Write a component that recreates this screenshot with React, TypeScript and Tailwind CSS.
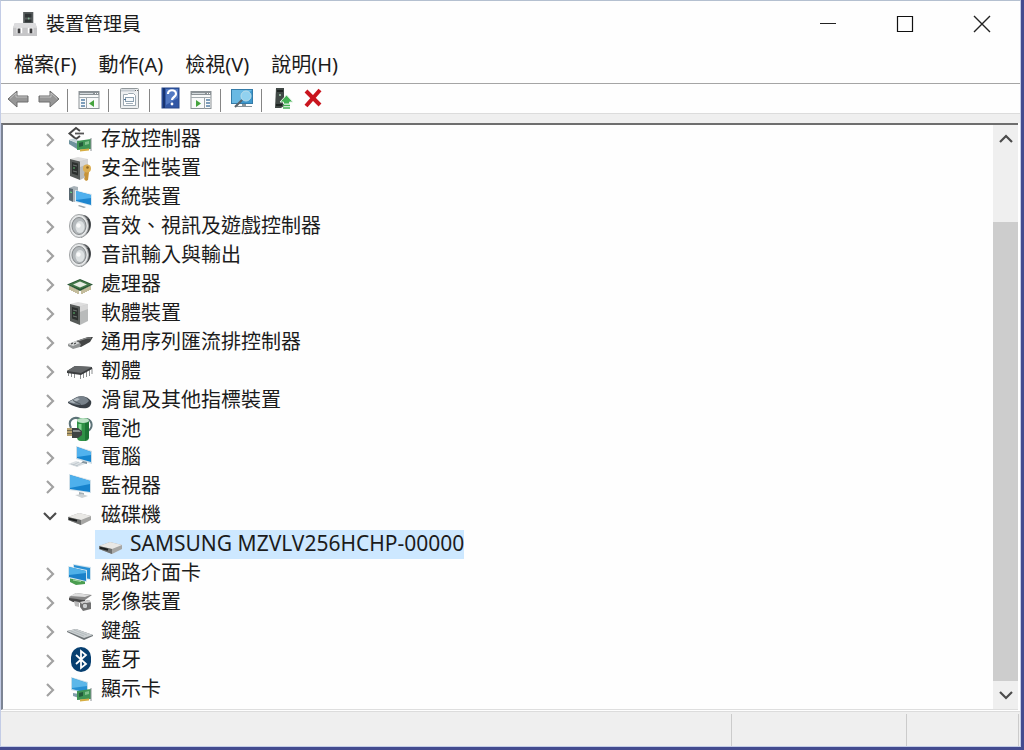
import type { ReactNode } from "react";

function Icon({ children, className = "h-[26px] w-[26px]" }: { children: ReactNode; className?: string }) {
    return (
        <svg viewBox="0 0 26 26" className={`shrink-0 ${className}`} aria-hidden="true">
            {children}
        </svg>
    );
}

const CardShape = () => (
    <>
        <path d="M10 15l14-2v10l-14 1z" fill="#3f9455" />
        <path d="M12 17l4-1v4l-4 1z" fill="#245a3b" />
        <path d="M18 16l4-1v3l-4 1z" fill="#7fc08c" />
        <path d="M13 23.500l9-1v2l-9 1z" fill="#d6ae43" />
        <path d="M24 12v13" stroke="#8a9094" />
    </>
);

const Storage = () => (
    <Icon>
        <path d="M13 5L9 2 2.500 7.500 9 13l4-3" fill="none" stroke="#454545" strokeWidth="2" />
        <path d="M8 7.500h9" fill="none" stroke="#555" strokeWidth="1.800" />
        <path d="M2 14l8 3v6l-8-5z" fill="#6f939e" />
        <path d="M2 13.500l5-1 7 3-4 2z" fill="#c6d5da" />
        <CardShape />
    </Icon>
);

const TowerShape = () => (
    <>
        <path d="M3 4l8-2 10 2-8 2.500z" fill="#dedede" />
        <path d="M3 4l10 2.500V25l-10-4z" fill="#565a58" />
        <path d="M13 6.500L21 4v17l-8 4z" fill="#b9bbbb" />
        <path d="M13 6.500L21 4v5l-8 3z" fill="#d6d6d6" />
        <path d="M5 7l6 1.500v12L5 18.500z" fill="#2c302e" />
        <path d="M6 10l4 1M6 16l4 1" stroke="#6f7572" />
        <circle cx="7" cy="13" r="0.800" fill="#63c977" />
    </>
);

const Software = () => (
    <Icon>
        <TowerShape />
    </Icon>
);

const Security = () => (
    <Icon>
        <TowerShape />
        <path d="M18 16l4 1-1 8-2 1-2-2 1-2-1-2z" fill="#c79338" />
        <circle cx="20" cy="13.500" r="4" fill="#dcae52" />
        <circle cx="20.500" cy="12.500" r="1.300" fill="#8e6824" />
    </Icon>
);

const SystemDevice = () => (
    <Icon>
        <path d="M2 4l5-2 4 1v14l-4 1-5-2z" fill="#a8b2b8" />
        <path d="M2 4l4 1v13l-4-2z" fill="#596770" />
        <path d="M3 8l2 .5" stroke="#6be28a" />
        <path d="M8 6l17 4v12L8 18z" fill="#dceaf2" />
        <path d="M9 7l15 4v10L9 17z" fill="#1e86cf" />
        <path d="M9 7l15 4v3L9 16z" fill="#4fb0ee" />
        <path d="M12 21l7 2-2 1-6-2z" fill="#9aa4aa" />
    </Icon>
);

const Speaker = () => (
    <Icon>
        <path d="M13 2c7-1 11 4 11 10s-5 11-10 13z" fill="#5d6063" />
        <path d="M21 6c3 5 1 11-3 15" stroke="#36393b" strokeWidth="2" fill="none" />
        <ellipse cx="12" cy="13" rx="9.500" ry="11.500" fill="#e4e6e7" stroke="#a0a3a5" />
        <ellipse cx="12" cy="13" rx="7" ry="8.500" fill="#b4b9bc" stroke="#85898b" />
        <ellipse cx="13" cy="14" rx="4.500" ry="6" fill="#dde1e2" />
        <circle cx="11.500" cy="12.500" r="2.200" fill="#fafafa" />
    </Icon>
);

const Processor = () => (
    <Icon>
        <path d="M3 15v4M5 16v4M7 17v4M9 18v4M11 19v4M15 19v4M17 18v4M19 17v4M21 16v4M23 15v4" stroke="#8a7d3c" />
        <path d="M0 13.500L13 8l13 5.500L13 20z" fill="#2b5535" />
        <path d="M2 13.500L13 9l11 4.500L13 18z" fill="#447a4a" />
        <path d="M6 13.500L13 10.500l7 3-7 3z" fill="#e6ebe3" />
    </Icon>
);

const Usb = () => (
    <Icon>
        <path d="M9 12l12-4 5 0-3 5-9 5-5-1z" fill="#434545" />
        <path d="M11 12l9-3 4 0" stroke="#8b8d8d" strokeWidth="1.200" fill="none" />
        <path d="M1 15l8-3 5 3-1 3-7 2-5-3z" fill="#8f9292" />
        <path d="M1 15l8-3 4 2-7 3z" fill="#d2d4d4" />
        <path d="M4 15l2-1M7 15l2-1" stroke="#303232" />
    </Icon>
);

const Firmware = () => (
    <Icon>
        <path d="M1.500 14v4M4.500 15v4M7.500 15v5M13.500 15v6M16.500 14v6M19.500 13v6M22.500 11v7M25 10v6" stroke="#8b8e8f" />
        <path d="M0 13l8-5 17 1v2l-11 6-14-2z" fill="#3b3d3f" />
        <path d="M0 13l8-5 17 1-11 6z" fill="#646769" />
    </Icon>
);

const Mouse = () => (
    <Icon>
        <path d="M1 15l9-5c5-2 11 0 14 4 1 3-1 6-4 7-6 1-13-1-19-5z" fill="#383f46" />
        <path d="M1 15l9-5c5-2 10 0 12 4-3 3-5 4-8 4-5 0-9-1-13-3z" fill="#77818a" />
        <path d="M2 15l8-4 3 1-6 4z" fill="#b1bac0" />
        <path d="M6 13.500l8 4" stroke="#4c555d" />
    </Icon>
);

const Battery = () => (
    <Icon>
        <path d="M4 12C0 4 7 0 13 3M20 3c6 2 6 9 1 12" fill="none" stroke="#5d7378" strokeWidth="2" />
        <rect x="10" y="2" width="12" height="23" rx="4" fill="#2f9146" />
        <path d="M18 4h1c2 0 3 2 3 4v14l-4 3z" fill="#1c7535" />
        <ellipse cx="16" cy="4.500" rx="6" ry="2.500" fill="#bbe1c4" />
        <path d="M13 8v7" stroke="#83d391" strokeWidth="3" />
        <path d="M0 12h6v8H0z" fill="#b7a26f" />
        <path d="M0 14.500h5M0 17.500h5" stroke="#6f684f" />
        <path d="M5 12h6l4 3v4l-4 3H5z" fill="#3e4343" />
        <path d="M6 14h6l2 2H6z" fill="#8a8f8f" />
    </Icon>
);

const Computer = () => (
    <Icon>
        <path d="M9 2l16 5v13L9 15z" fill="#cfdde5" />
        <path d="M10 3l14 5v10l-14-4z" fill="#1685cf" />
        <path d="M10 3l14 5v3l-14 2z" fill="#51b2ee" />
        <path d="M16 17l4 1v2l-6-1z" fill="#8495a0" />
        <path d="M1 20l8-3 9 3-8 3z" fill="#dce1e4" />
        <path d="M4 20l7 2M6 21l6-3M9 22l6-3" stroke="#b5bfc5" strokeWidth="0.700" />
    </Icon>
);

const Monitor = () => (
    <Icon>
        <path d="M2 1l22 6v13L2 17z" fill="#d0dfe8" />
        <path d="M3 2l20 6v11L3 16z" fill="#1683cd" />
        <path d="M3 2l20 6v3L3 15z" fill="#4eb0ec" />
        <path d="M12 19l5 1v3l-5-1z" fill="#a6b0b5" />
        <path d="M8 22l7-1 6 2-6 2z" fill="#ccd1d3" />
    </Icon>
);

const Disk = () => (
    <Icon>
        <path d="M1 15l11-4 12 3v4l-10 5-13-5z" fill="#a6a6a4" />
        <path d="M1 15l11-4 12 3-10 4z" fill="#e9e8e5" />
        <path d="M1 15l13 3v5L1 18z" fill="#6d6f6e" />
        <path d="M2 16.800l8 2" stroke="#1e2020" strokeWidth="2" />
    </Icon>
);

const Network = () => (
    <Icon>
        <path d="M3 18l15 3v3L9 25l-6-3z" fill="#4a9d4f" />
        <path d="M6 20l8 1.500" stroke="#a4d9a1" />
        <path d="M6 4l18 3v13L6 17z" fill="#cce1ed" />
        <path d="M7 5l16 3v11L7 16z" fill="#288fd3" />
        <path d="M1 6l19 4v12L1 18z" fill="#d4e7f0" />
        <path d="M2 7l17 4v10L2 17z" fill="#1b81c9" />
        <path d="M2 7l17 4v2L2 15z" fill="#50b1e8" />
    </Icon>
);

const Imaging = () => (
    <Icon>
        <path d="M2 8l7-4 16 2-7 5-15-1z" fill="#888" />
        <path d="M3 7l6-3 14 2-5 2z" fill="#ddd" />
        <path d="M2 9l16 2v3l-12-1-4-2z" fill="#494949" />
        <path d="M7 12l5 1v5l-4-1z" fill="#bababa" />
        <path d="M13 13l9-2 2 3v6l-8 2-3-4z" fill="#707171" />
        <path d="M13 13l9-2 2 2-9 2z" fill="#d0d0d0" />
        <circle cx="18" cy="17" r="2.800" fill="#c9cccd" stroke="#666" />
    </Icon>
);

const Keyboard = () => (
    <Icon>
        <path d="M0 13l9-2 17 6v1l-9 4L0 14z" fill="#6c7275" />
        <path d="M0 13l9-2 17 6-9 3z" fill="#cbd0d2" />
        <path d="M4 13l13 5M7 12l13 5" stroke="#a9b1b5" strokeWidth="0.700" />
    </Icon>
);

const Bluetooth = () => (
    <Icon>
        <rect x="4" y="0" width="20" height="25" rx="10" fill="#073f70" />
        <path d="M9 8l10 9-5 4V4l5 4-10 9" fill="none" stroke="#fff" strokeWidth="1.800" />
    </Icon>
);

const Display = () => (
    <Icon>
        <path d="M4 1l17 5v12L4 14z" fill="#c5dce7" />
        <path d="M5 2l15 5v10L5 13z" fill="#2790d2" />
        <path d="M5 2l15 5v3L5 12z" fill="#5cb7e9" />
        <path d="M6 17l6 1v4l-6-2z" fill="#829daa" />
        <CardShape />
    </Icon>
);

const devices = [
    { name: "存放控制器", icon: Storage },
    { name: "安全性裝置", icon: Security },
    { name: "系統裝置", icon: SystemDevice },
    { name: "音效、視訊及遊戲控制器", icon: Speaker },
    { name: "音訊輸入與輸出", icon: Speaker },
    { name: "處理器", icon: Processor },
    { name: "軟體裝置", icon: Software },
    { name: "通用序列匯流排控制器", icon: Usb },
    { name: "韌體", icon: Firmware },
    { name: "滑鼠及其他指標裝置", icon: Mouse },
    { name: "電池", icon: Battery },
    { name: "電腦", icon: Computer },
    { name: "監視器", icon: Monitor },
    { name: "磁碟機", icon: Disk, open: true },
    { name: "SAMSUNG MZVLV256HCHP-00000", icon: Disk, child: true },
    { name: "網路介面卡", icon: Network },
    { name: "影像裝置", icon: Imaging },
    { name: "鍵盤", icon: Keyboard },
    { name: "藍牙", icon: Bluetooth },
    { name: "顯示卡", icon: Display },
];

const menus = ["檔案(F)", "動作(A)", "檢視(V)", "說明(H)"];

const ToolButton = ({ label, children }: { label: string; children: ReactNode }) => (
    <button type="button" aria-label={label} className="flex h-[26px] w-[30px] items-center justify-center">
        <Icon>{children}</Icon>
    </button>
);

const Separator = () => <div className="ml-1 mr-[6px] h-[23px] w-px bg-[#858585]" />;

const PanelShape = () => (
    <>
        <rect x="3" y="5.500" width="20" height="17" fill="#f9fafa" stroke="#8b9296" />
        <path d="M3 7.500h20" stroke="#8b9296" strokeWidth="3" />
        <path d="M4 7.500h13" stroke="#d3d9dc" />
        <path d="M19 7.500h3" stroke="#fff" strokeDasharray="1 1" />
        <path d="M3 11.500h20" stroke="#a4acb0" />
    </>
);

function Toolbar() {
    return (
        <div role="toolbar" className="flex h-[30px] items-end border-b border-[#dcdcdc] pb-px pl-[2px]">
            <ToolButton label="上一頁">
                <path d="M3 13l9-8v5h11v6H12v5z" fill="#969696" stroke="#6c6c6c" strokeLinejoin="round" />
                <path d="M5 12.500l6-5.500v4h11" fill="none" stroke="#c0c0c0" />
            </ToolButton>
            <ToolButton label="下一頁">
                <path d="M24 13l-9-8v5H4v6h11v5z" fill="#969696" stroke="#6c6c6c" strokeLinejoin="round" />
                <path d="M22 12.500L16 7v4H5" fill="none" stroke="#c0c0c0" />
            </ToolButton>
            <Separator />
            <ToolButton label="顯示/隱藏主控台樹狀目錄">
                <PanelShape />
                <path d="M10.500 12v11" stroke="#9ba3a8" />
                <path d="M5 14h4M5 17h4M5 20h4" stroke="#5680a5" strokeWidth="1.500" />
                <path d="M18 14v7l-5-3.500z" fill="#45a33d" />
            </ToolButton>
            <Separator />
            <ToolButton label="內容">
                <rect x="3.500" y="2.500" width="18" height="20" rx="1" fill="#eef0f1" stroke="#92989b" />
                <path d="M4 4.500h14" stroke="#c4cbd0" strokeWidth="2" />
                <path d="M18 4.500h3" stroke="#666" strokeDasharray="1 1" />
                <path d="M6.500 8.500h4l1-1h5l2 2v10h-12z" fill="#fff" stroke="#9ca8b1" />
                <rect x="8.500" y="11.500" width="8" height="4" fill="#f4f7f9" stroke="#8ba0b0" />
                <path d="M9 17.500h7" stroke="#a3b0ba" />
                <path d="M7 13.500h2" stroke="#4b6f90" />
            </ToolButton>
            <Separator />
            <ToolButton label="說明">
                <rect x="4" y="2" width="17" height="20" fill="#3157a5" stroke="#29498b" />
                <path d="M6 2v20" stroke="#17336f" strokeWidth="2" />
                <path d="M8 3h12v9L8 19z" fill="#5279c2" />
                <path d="M10 8c0-5 8-5 8 0 0 3-4 3-4 6" fill="none" stroke="#fff" strokeWidth="2.200" />
                <circle cx="14" cy="18" r="1.400" fill="#fff" />
            </ToolButton>
            <ToolButton label="動作窗格">
                <PanelShape />
                <path d="M16.500 12v11" stroke="#9ba3a8" />
                <path d="M18 14h4M18 17h4M18 20h4" stroke="#5680a5" strokeWidth="1.500" />
                <path d="M8 14v7l5-3.500z" fill="#45a33d" />
            </ToolButton>
            <Separator />
            <ToolButton label="掃描硬體變更">
                <rect x="2.500" y="3.500" width="21" height="14" fill="#3e98cd" stroke="#347ca9" />
                <path d="M3 4h20L9 17H3z" fill="#69b9e3" />
                <path d="M13 18h4v2h6v1H8v-1h5z" fill="#879298" />
                <path d="M13 14l-7 7" stroke="#59636a" strokeWidth="2.200" />
                <circle cx="17" cy="10" r="5" fill="#91d1ef" stroke="#b8dce9" />
            </ToolButton>
            <Separator />
            <ToolButton label="更新驅動程式">
                <path d="M6 2h8v18l-3 2H5z" fill="#404845" />
                <path d="M7 5h6M6 19h6" stroke="#1d2421" strokeWidth="2" />
                <circle cx="10" cy="9" r="1" fill="#a5cfb0" />
                <path d="M16.500 9l6.500 7h-3.500v2h-6v-2H10z" fill="#42b153" stroke="#e4f2e6" />
                <path d="M13 19.500h7M13 22h7" stroke="#42b153" strokeWidth="1.500" />
            </ToolButton>
            <ToolButton label="解除安裝">
                <path d="M6 5l14 14M20 4L6 20" stroke="#c9151e" strokeWidth="4" />
            </ToolButton>
        </div>
    );
}

function Chevron({ direction }: { direction: "up" | "down" | "right" }) {
    const d = { up: "M1 10l6-6 6 6", down: "M1 4l6 6 6-6", right: "M4 1l6 6-6 6" }[direction];
    return (
        <svg viewBox="0 0 14 14" className="h-[14px] w-[14px] shrink-0" aria-hidden="true">
            <path d={d} fill="none" stroke={direction === "right" ? "#a2a2a2" : "#4b4b4b"} strokeWidth="2.200" />
        </svg>
    );
}

function DeviceTree() {
    return (
        <ul role="tree" className="flex flex-1 flex-col pb-[6px] pl-[39px] text-[20px] leading-[26px]">
            {devices.map(({ name, icon: DeviceIcon, open, child }) => (
                <li key={name} role="treeitem" aria-selected={!!child} className="flex min-h-7 flex-1 items-center">
                    {child ? (
                        <div className="ml-[53px] flex h-[29px] items-center gap-[6px] bg-[#cde8ff] pl-[3px]">
                            <DeviceIcon />
                            <span className="whitespace-nowrap pb-[2px] text-[21px]">{name}</span>
                        </div>
                    ) : (
                        <>
                            <button type="button" aria-label={name} aria-expanded={!!open} className="mr-[9px] flex w-4 justify-center pt-[2px]">
                                <Chevron direction={open ? "down" : "right"} />
                            </button>
                            <DeviceIcon />
                            <span className="ml-2 whitespace-nowrap">{name}</span>
                        </>
                    )}
                </li>
            ))}
        </ul>
    );
}

function ScrollBar() {
    return (
        <div className="flex w-[25px] shrink-0 flex-col bg-[#efefef]">
            <button type="button" aria-label="向上捲動" className="flex h-7 items-center justify-center">
                <Chevron direction="up" />
            </button>
            <div className="h-[69px]" />
            <div className="flex-1 bg-[#cdcdcd]" />
            <button type="button" aria-label="向下捲動" className="flex h-7 items-center justify-center">
                <Chevron direction="down" />
            </button>
        </div>
    );
}

export default function App() {
    return (
        <div className="flex min-h-screen flex-col bg-[#434b8f] pb-[3px] pr-[3px] font-['Noto_Sans','Noto_Sans_CJK_TC',sans-serif] text-[#1c1c1c]">
            <div className="flex flex-1 flex-col border border-[#c3cce6] border-t-[#b4c0d0] bg-[#fefefe]">
                <header className="flex h-[46px] items-center pl-3">
                    <Icon className="h-7 w-6">
                        <path d="M11 0h11v14H11z" fill="#555a5b" />
                        <path d="M13 2h7v4h-7zM13 8h7v3h-7z" fill="#2f3435" />
                        <circle cx="17" cy="7" r="1" fill="#84b295" />
                        <path d="M2 12h22l2 5v9H0v-9z" fill="#c5c5c7" />
                        <path d="M2 12h22l2 5H0z" fill="#dcdcde" />
                        <path d="M4 17h6v6H4zM16 17h6v6h-6z" fill="#fff" />
                        <path d="M5 18h3v5H5zM18 18h3v5h-3z" fill="#3d3d3f" />
                    </Icon>
                    <h1 className="ml-[9px] flex-1 text-[19px] leading-6">裝置管理員</h1>
                    <div className="flex self-stretch">
                        <button type="button" aria-label="最小化" className="flex w-[77px] items-center justify-center">
                            <svg viewBox="0 0 18 18" className="h-[18px] w-[18px]"><path d="M1 8.500h16" stroke="#222" /></svg>
                        </button>
                        <button type="button" aria-label="最大化" className="flex w-[77px] items-center justify-center">
                            <svg viewBox="0 0 18 18" className="h-[18px] w-[18px]"><path d="M1.500 1.500h15v15h-15z" fill="none" stroke="#111" strokeWidth="1.200" /></svg>
                        </button>
                        <button type="button" aria-label="關閉" className="flex w-[77px] items-center justify-center">
                            <svg viewBox="0 0 18 18" className="h-[18px] w-[18px]"><path d="M1 1l16 16M17 1L1 17" stroke="#222" strokeWidth="1.400" /></svg>
                        </button>
                    </div>
                </header>

                <nav className="flex h-[37px] items-center gap-[22px] border-b border-[#a5a5a5] pl-[13px] text-[20px] leading-[26px]">
                    {menus.map((menu) => (
                        <button key={menu} type="button">{menu}</button>
                    ))}
                </nav>

                <Toolbar />
                <div className="h-[9px] bg-[#efefef]" />

                <main className="mr-[2px] flex flex-1 border-b border-l-2 border-t-2 border-b-[#dedede] border-l-[#7c8494] border-t-[#6e6e6e]">
                    <DeviceTree />
                    <ScrollBar />
                </main>

                <footer className="mt-px flex h-[35px] items-end border-t border-[#dcdcdc] bg-[#efefef] pr-px">
                    <div className="h-8 flex-1 border-r border-[#cbcbcb]" />
                    <div className="h-8 w-[175px] border-r border-[#cbcbcb]" />
                    <div className="h-8 w-[112px] border-r border-[#cbcbcb]" />
                </footer>
            </div>
        </div>
    );
}
